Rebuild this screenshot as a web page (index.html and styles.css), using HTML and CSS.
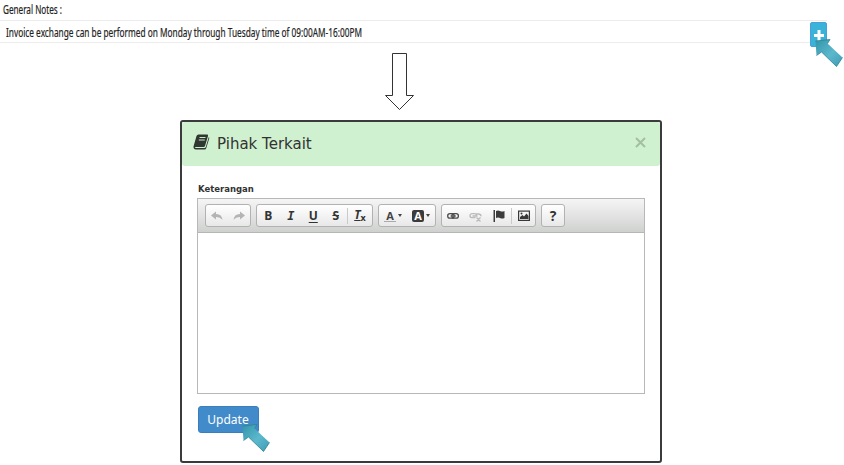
FILE: index.html
```html
<!DOCTYPE html>
<html lang="en">
<head>
<meta charset="utf-8">
<title>General Notes</title>
<link rel="stylesheet" href="styles.css">
</head>
<body>
<svg width="0" height="0" class="defs"><defs>
<linearGradient id="teal" x1="0" y1="0" x2="1" y2="1"><stop offset="0" stop-color="#3295a9"/><stop offset=".55" stop-color="#5cb8cd"/><stop offset="1" stop-color="#3d9cb3"/></linearGradient>
<symbol id="pointer" viewBox="0 0 28 29"><path d="M.5 2 15 .5 12.500 4.500 27.500 18.500 21.500 27.500 6.500 13 1.500 16.500Z" fill="url(#teal)"/><path d="M.5 2 15 .5 12.500 4.500M27.500 18.500 21.500 27.500 6.500 13 1.500 16.500" fill="none" stroke="#2e8194" stroke-width=".8"/></symbol>
</defs></svg>
<main class="page">
  <svg class="label" width="120" height="20"><text x="3" y="14" textLength="59" lengthAdjust="spacingAndGlyphs">General Notes :</text></svg>
  <div class="note">
    <svg class="line" width="700" height="21"><text x="6" y="16" textLength="356" lengthAdjust="spacingAndGlyphs">Invoice exchange can be performed on Monday through Tuesday time of 09:00AM-16:00PM</text></svg>
    <button class="add" aria-label="Add"><svg width="10" height="14"><path d="M3.5 2h3v4H10v3H6.5v4.500h-3V9H0V6h3.500z" fill="#fff"/></svg></button>
    <svg class="pointer add-pointer" width="28" height="29"><use href="#pointer"/></svg>
  </div>
  <svg class="flow" width="32" height="59" viewBox="0 0 32 59"><path d="M8.500 1.500V43.500H1.500L15.500 57.500 29.500 43.500H22.500V1.500Z" fill="#fff" stroke="#333"/></svg>
  <section class="modal">
    <header class="head">
      <svg class="book" width="17" height="16" viewBox="0 0 17 16"><path d="M5.500.5H14q1.400 0 1 1.400L12 12q-.4 1-1.500 1H3q-1.300.2-.9 1H11.500q1 0 1.300-1L15.800 3q.7.5.4 1.400L13.300 14q-.4 1.500-1.900 1.500H3Q.3 15.500.5 12.500L3.500 2Q4 .5 5.500.5Z" fill="#303630"/><path d="M6.500 3.500h6M5.800 6h6" stroke="#cbe9cb" stroke-width="1"/></svg>
      <h1 class="title">Pihak Terkait</h1>
      <svg class="close" width="11" height="11"><path d="M1 1 10 10M10 1 1 10" stroke="#a3bfa2" stroke-width="2"/></svg>
    </header>
    <div class="content">
      <label class="field">Keterangan</label>
      <div class="editor">
        <div class="toolbar">
          <div class="group undo">
            <svg class="ico" width="12" height="10"><path d="M0 4.500 5 .5v2.500q6 0 6.500 6Q9 6 5 6v2.500Z" fill="#b4b4b4"/></svg>
            <svg class="ico" width="12" height="10"><path d="M12 4.500 7 .5v2.500Q1 3 .5 9 3 6 7 6v2.500Z" fill="#b4b4b4"/></svg>
          </div>
          <div class="group format">
            <b class="cell">B</b><b class="cell italic">I</b><b class="cell under">U</b><b class="cell strike">S</b><i class="sep"></i><b class="cell clear"><span class="clear-t">T</span><small>x</small></b>
          </div>
          <div class="group colors">
            <span class="pick"><b class="ink">A</b><i class="caret"></i></span>
            <span class="pick"><b class="fill">A</b><i class="caret"></i></span>
          </div>
          <div class="group links">
            <svg class="tool" width="22" height="20"><rect x="5.700" y="7.700" width="6.500" height="4.400" rx="2.200" fill="none" stroke="#4b4b4b" stroke-width="1.300"/><rect x="9.900" y="7.700" width="6.500" height="4.400" rx="2.200" fill="none" stroke="#4b4b4b" stroke-width="1.300"/><path d="M8.500 10h5.500" stroke="#4b4b4b"/></svg>
            <svg class="tool" width="23" height="20"><path d="M11.500 11.700H8.500q-2.500 0-2.500-2t2.500-2h2q2 0 2 2M11.500 8h3q2.500 0 2.500 2.200M8.500 10h5M12.500 11.500l4 4M16.500 11.500l-4 4" fill="none" stroke="#bbb" stroke-width="1.300"/></svg>
            <svg class="tool" width="24" height="20"><path d="M6.500 4H8v12H6.500zM9 5q2-1 4 0t4.500 0v7q-2.500 1-4.500 0t-4 0z" fill="#3c3c3c"/></svg>
            <i class="sep"></i>
            <svg class="tool" width="23" height="20"><rect x="6.600" y="5.100" width="10.800" height="9.300" fill="none" stroke="#383838" stroke-width="1.200"/><path d="M8 13v-2l2.500-2 1.500 1.500 2.500-3 2 2.500v3z" fill="#383838"/><circle cx="9.500" cy="7.500" r="1" fill="#383838"/></svg>
          </div>
          <div class="group help">?</div>
        </div>
        <div class="text-area"></div>
      </div>
      <div class="actions">
        <button class="update">Update</button>
        <svg class="pointer update-pointer" width="28" height="29"><use href="#pointer"/></svg>
      </div>
    </div>
  </section>
</main>
</body>
</html>
```
FILE: styles.css
```css
* { box-sizing: border-box; }
body { margin: 0; background: #fff; color: #333; font-family: "DejaVu Sans", Verdana, sans-serif; overflow: hidden; }
button { margin: 0; border: 0; padding: 0; font: inherit; }
svg { display: block; flex: none; }
.defs { position: absolute; }
.page { width: 844px; height: 465px; display: flex; flex-direction: column; }
.label, .line { font: 12.500px "Noto Sans", sans-serif; fill: #222; stroke: #222; stroke-width: .2px; }
.label { height: 20px; }
.note { position: relative; height: 23px; width: 827px; border-top: 1px solid #ececec; border-bottom: 1px solid #ececec; display: flex; justify-content: space-between; }
.add { width: 17px; height: 25px; margin-top: 1px; flex: none; display: flex; align-items: center; justify-content: center; background: #39b3d7; border: 1px solid #4a9edd; border-radius: 2px; }
.pointer { position: absolute; }
.add-pointer { left: 815px; top: 18px; }
.flow { margin: 9px 0 0 384px; }
.modal { width: 482px; height: 343px; margin: 9px 0 0 180px; border: 2px solid #393b3d; border-radius: 3px; background: #fff; }
.head { height: 44px; padding: 0 14px 0 11px; display: flex; align-items: center; background: #d0f1cf; border-radius: 3px; }
.book { margin-top: -4px; }
.title { margin: 0 0 0 7px; font-size: 15px; font-weight: 400; line-height: 20px; }
.close { margin: -4px 0 0 auto; }
.content { padding: 16px 15px 0; }
.field { display: block; height: 16px; padding-left: 1px; font-size: 8.500px; font-weight: 700; line-height: 14px; }
.editor { width: 448px; height: 196px; border: 1px solid #b8b8b8; }
.toolbar { height: 34px; padding: 5px 6px 0 7px; display: flex; gap: 5px; background: linear-gradient(#f5f5f5, #cfd1cf); border-bottom: 1px solid #b6b6b6; }
.group { height: 23px; flex: none; display: flex; align-items: center; border: 1px solid #b2b2b2; border-radius: 3px; background: linear-gradient(#fff, #e8e8e8); }
.undo { width: 46px; justify-content: space-around; }
.format { width: 117px; }
.colors { width: 58px; justify-content: space-around; }
.links { width: 95px; }
.help { width: 24px; justify-content: center; font: 700 14px "Open Sans", sans-serif; color: #333; }
.cell { width: 22.500px; text-align: center; font: 700 12px/20px "Open Sans", sans-serif; color: #333; }
.italic { font-family: "DejaVu Sans Mono", monospace; font-style: italic; }
.under { text-decoration: underline; text-underline-offset: 2px; }
.strike { text-decoration: line-through; }
.sep { width: 1px; height: 16px; flex: none; background: #cacaca; }
.clear { width: 24px; white-space: nowrap; }
.clear-t { font-style: italic; text-decoration: underline; }
.clear small { font-size: 9px; position: relative; top: 2px; }
.pick { display: flex; align-items: center; gap: 2px; }
.ink, .fill { width: 12px; height: 12px; text-align: center; font: 700 11px/11px "Open Sans", sans-serif; }
.ink { border-bottom: 1px solid #aaa; color: #444; }
.fill { background: #3b3b3b; border-radius: 2px; color: #fff; }
.caret { border: 2.500px solid transparent; border-top: 3px solid #444; border-bottom: 0; }
.actions { position: relative; margin-top: 12px; }
.update { display: block; width: 61px; height: 27px; margin-left: .5px; border: 1px solid #3a7fbd; border-radius: 3px; background: #428bca; color: #fff; font: 12px "Noto Sans", sans-serif; }
.update-pointer { left: 45px; top: 18px; }
```
